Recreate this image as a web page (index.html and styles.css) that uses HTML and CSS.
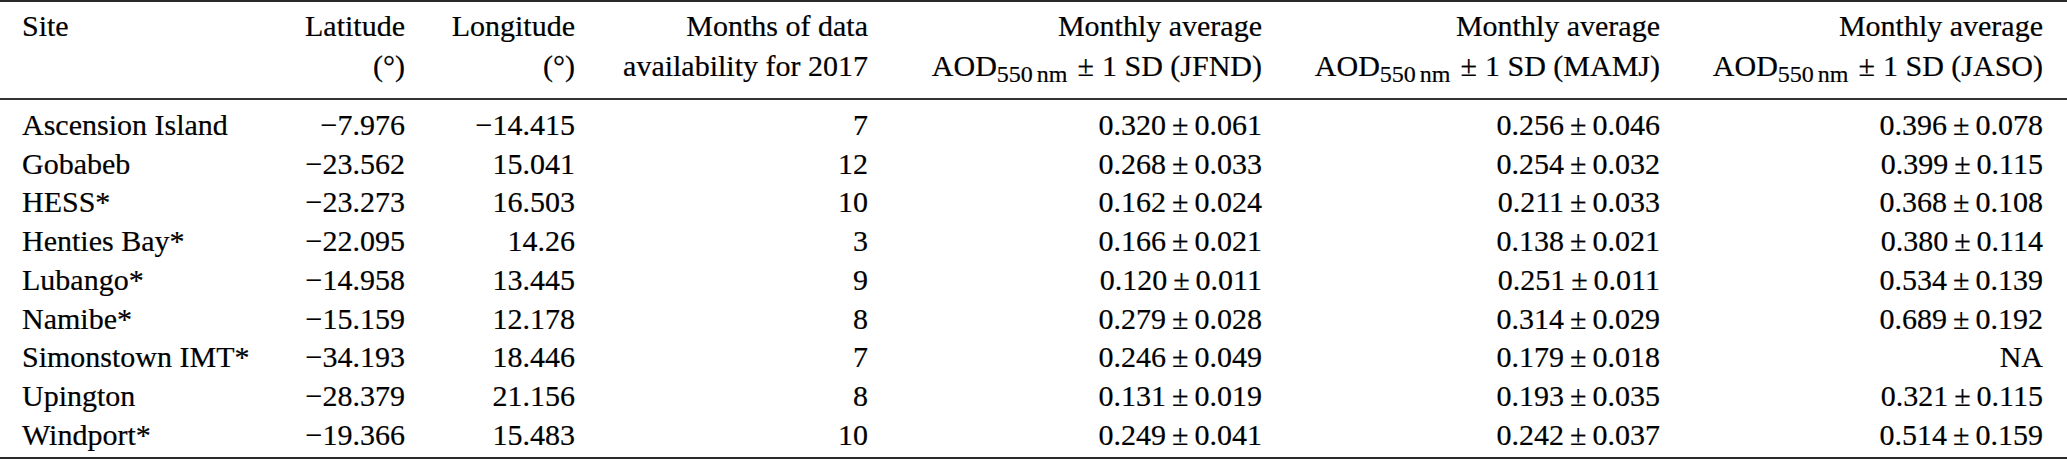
FILE: index.html
```html
<!DOCTYPE html>
<html lang="en">
<head>
<meta charset="utf-8">
<title>AOD table</title>
<link rel="stylesheet" href="styles.css">
</head>
<body>
<table class="aod">
  <colgroup>
    <col class="c-site"><col class="c-lat"><col class="c-lon"><col class="c-months">
    <col class="c-jfnd"><col class="c-mamj"><col class="c-jaso">
  </colgroup>
  <thead>
    <tr>
      <th class="site">Site</th>
      <th>Latitude<br>(°)</th>
      <th>Longitude<br>(°)</th>
      <th>Months of data<br>availability for 2017</th>
      <th>Monthly average<br>AOD<sub>550<span class="thin"></span>nm</sub><span class="pm">±</span>1 SD (JFND)</th>
      <th>Monthly average<br>AOD<sub>550<span class="thin"></span>nm</sub><span class="pm">±</span>1 SD (MAMJ)</th>
      <th class="last">Monthly average<br>AOD<sub>550<span class="thin"></span>nm</sub><span class="pm">±</span>1 SD (JASO)</th>
    </tr>
  </thead>
  <tbody>
    <tr><td class="site">Ascension Island</td><td>−7.976</td><td>−14.415</td><td>7</td><td>0.320<span class="pm">±</span>0.061</td><td>0.256<span class="pm">±</span>0.046</td><td class="last">0.396<span class="pm">±</span>0.078</td></tr>
    <tr><td class="site">Gobabeb</td><td>−23.562</td><td>15.041</td><td>12</td><td>0.268<span class="pm">±</span>0.033</td><td>0.254<span class="pm">±</span>0.032</td><td class="last">0.399<span class="pm">±</span>0.115</td></tr>
    <tr><td class="site">HESS*</td><td>−23.273</td><td>16.503</td><td>10</td><td>0.162<span class="pm">±</span>0.024</td><td>0.211<span class="pm">±</span>0.033</td><td class="last">0.368<span class="pm">±</span>0.108</td></tr>
    <tr><td class="site">Henties Bay*</td><td>−22.095</td><td>14.26</td><td>3</td><td>0.166<span class="pm">±</span>0.021</td><td>0.138<span class="pm">±</span>0.021</td><td class="last">0.380<span class="pm">±</span>0.114</td></tr>
    <tr><td class="site">Lubango*</td><td>−14.958</td><td>13.445</td><td>9</td><td>0.120<span class="pm">±</span>0.011</td><td>0.251<span class="pm">±</span>0.011</td><td class="last">0.534<span class="pm">±</span>0.139</td></tr>
    <tr><td class="site">Namibe*</td><td>−15.159</td><td>12.178</td><td>8</td><td>0.279<span class="pm">±</span>0.028</td><td>0.314<span class="pm">±</span>0.029</td><td class="last">0.689<span class="pm">±</span>0.192</td></tr>
    <tr><td class="site">Simonstown IMT*</td><td>−34.193</td><td>18.446</td><td>7</td><td>0.246<span class="pm">±</span>0.049</td><td>0.179<span class="pm">±</span>0.018</td><td class="last">NA</td></tr>
    <tr><td class="site">Upington</td><td>−28.379</td><td>21.156</td><td>8</td><td>0.131<span class="pm">±</span>0.019</td><td>0.193<span class="pm">±</span>0.035</td><td class="last">0.321<span class="pm">±</span>0.115</td></tr>
    <tr><td class="site">Windport*</td><td>−19.366</td><td>15.483</td><td>10</td><td>0.249<span class="pm">±</span>0.041</td><td>0.242<span class="pm">±</span>0.037</td><td class="last">0.514<span class="pm">±</span>0.159</td></tr>
  </tbody>
</table>
</body>
</html>
```

FILE: styles.css
```css
html, body {
  margin: 0;
  padding: 0;
  background: #ffffff;
}

body {
  font-family: "Liberation Serif", "Times New Roman", serif;
  color: #000000;
}

.aod {
  width: 2067px;
  border-collapse: separate;
  border-spacing: 0;
  table-layout: fixed;
  font-size: 30px;
  -webkit-text-stroke: 0.2px #000000;
}

.c-site { width: 260px; }
.c-lat { width: 145px; }
.c-lon { width: 170px; }
.c-months { width: 293px; }
.c-jfnd { width: 394px; }
.c-mamj { width: 398px; }
.c-jaso { width: 407px; }

.aod th {
  font-weight: normal;
  line-height: 40px;
  padding: 4px 0 12px 0;
  vertical-align: top;
  text-align: right;
  white-space: nowrap;
  border-top: 2px solid #2a2a2a;
  border-bottom: 2px solid #333333;
}

.aod td {
  line-height: 38.7px;
  padding: 0;
  text-align: right;
  white-space: nowrap;
}

.aod tbody tr:first-child td {
  padding-top: 6px;
}

.aod tbody tr:last-child td {
  padding-bottom: 3px;
  border-bottom: 2px solid #2a2a2a;
}

.aod .site {
  text-align: left;
  padding-left: 22px;
}

.aod .last {
  padding-right: 24px;
}

.aod sub {
  font-size: 24px;
  line-height: 0;
  vertical-align: -6px;
  margin-right: 2px;
}

.thin {
  display: inline-block;
  width: 4px;
}

.pm {
  margin: 0 6px;
}

.aod th .pm {
  margin: 0 8px;
}
```
